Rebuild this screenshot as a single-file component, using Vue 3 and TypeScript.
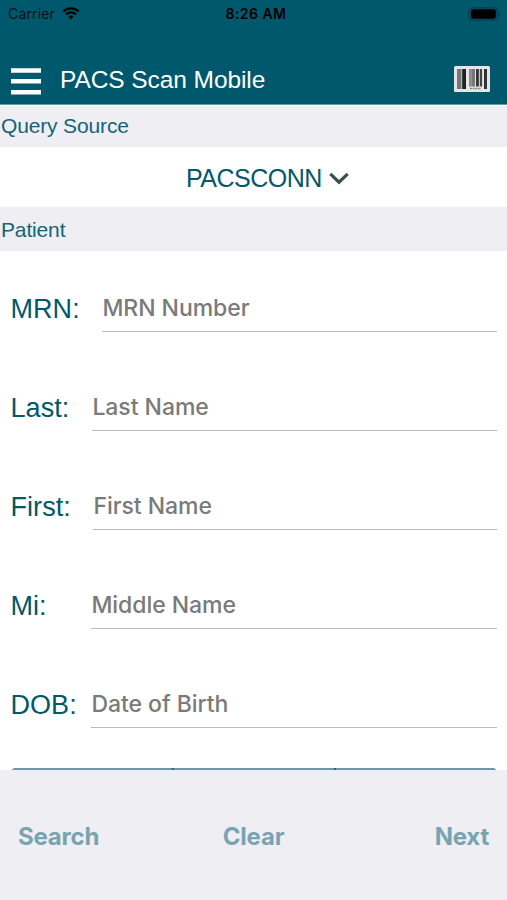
<script setup lang="ts">
import { reactive } from 'vue'

interface Field {
  key: string
  label: string
  placeholder: string
}

const fields: Field[] = [
  { key: 'mrn', label: 'MRN:', placeholder: 'MRN Number' },
  { key: 'last', label: 'Last:', placeholder: 'Last Name' },
  { key: 'first', label: 'First:', placeholder: 'First Name' },
  { key: 'mi', label: 'Mi:', placeholder: 'Middle Name' },
  { key: 'dob', label: 'DOB:', placeholder: 'Date of Birth' },
]

const values = reactive<Record<string, string>>({ mrn: '', last: '', first: '', mi: '', dob: '' })
</script>

<template>
  <div class="screen">
    <header class="top">
      <div class="status">
        <div class="carrier">
          <span>Carrier</span>
          <svg class="wifi" width="18" height="13" viewBox="0 0 18 13">
            <path d="M1.3 4.5a11 11 0 0 1 15.4 0" fill="none" stroke="#000" stroke-width="2.3" />
            <path d="M4 7.5a7.1 7.1 0 0 1 10 0" fill="none" stroke="#000" stroke-width="2.2" />
            <path d="M6.4 9.7a3.7 3.7 0 0 1 5.2 0L9 12.3z" fill="#000" />
          </svg>
        </div>
        <span class="time">8:26 AM</span>
        <svg class="battery" width="33" height="14" viewBox="0 0 33 14">
          <rect x=".8" y=".8" width="28.5" height="12.4" rx="3.5" fill="none" stroke="#003f4e" stroke-width="1.2" />
          <rect x="2.8" y="2.3" width="25" height="9.4" rx="2" fill="#000" />
          <path d="M30.7 5v4c1.6-.7 1.6-3.3 0-4z" fill="#003f4e" />
        </svg>
      </div>
      <div class="nav">
        <svg class="menu" width="30" height="27" viewBox="0 0 30 27">
          <path d="M0 2.5h30M0 13.3h30M0 24.2h30" stroke="#fff" stroke-width="4.4" />
        </svg>
        <h1 class="title">PACS Scan Mobile</h1>
        <svg class="barcode" width="36" height="26" viewBox="0 0 36 26">
          <rect width="36" height="26" rx="1.5" fill="#e4e6e7" />
          <rect x="3" y="3" width="4.5" height="20" fill="#777" />
          <rect x="8.2" y="3" width="3.8" height="20" fill="#222" />
          <rect x="15" y="3" width="2.8" height="17.5" fill="#888" />
          <rect x="17.8" y="3" width="3.2" height="17.5" fill="#777" />
          <rect x="22" y="3" width="2.8" height="17.5" fill="#333" />
          <rect x="25.8" y="3" width="2.3" height="17.5" fill="#444" />
          <rect x="30" y="3" width="3" height="20" fill="#333" />
          <path d="M16 22.6h11" stroke="#888" stroke-width="1.5" stroke-dasharray="2 .6" />
        </svg>
      </div>
    </header>

    <h2 class="section first">Query Source</h2>
    <div class="source">
      <span class="source-name">PACSCONN</span>
      <svg class="chevron" width="20" height="13" viewBox="0 0 20 13">
        <path d="M1.3 1.8 10 10.2l8.7-8.4" fill="none" stroke="#36504f" stroke-width="3.2" />
      </svg>
    </div>
    <h2 class="section">Patient</h2>

    <main class="form">
      <label v-for="f in fields" :key="f.key" class="row" :class="f.key">
        <span class="label">{{ f.label }}</span>
        <input v-model="values[f.key]" class="input" type="text" :placeholder="f.placeholder" />
      </label>
      <div class="segments">
        <span class="segment"></span>
        <span class="segment"></span>
        <span class="segment"></span>
      </div>
    </main>

    <footer class="actions">
      <button class="action search">Search</button>
      <button class="action clear">Clear</button>
      <button class="action next">Next</button>
    </footer>
  </div>
</template>

<style>
body {
  margin: 0;
  background: #fff;
}
</style>

<style scoped>
.screen {
  display: flex;
  flex-direction: column;
  width: 507px;
  height: 900px;
  overflow: hidden;
  background: #fff;
  color: #00586d;
  font-family: "Liberation Sans", sans-serif;
}
.top {
  height: 104px;
  flex: none;
  background: #00586d;
  border-bottom: 1px solid #609aa8;
}
.status {
  display: grid;
  grid-template-columns: 1fr auto 1fr;
  align-items: center;
  height: 27px;
  padding: 0 6px 0 8px;
  color: #001217;
  font-family: Inter, sans-serif;
  font-size: 14px;
}
.carrier {
  display: flex;
  align-items: center;
  gap: 7px;
  letter-spacing: .15px;
}
.time {
  color: #000;
  font-weight: 600;
  letter-spacing: .45px;
  padding-left: 3px;
}
.battery {
  justify-self: end;
}
.nav {
  display: flex;
  align-items: center;
  box-sizing: border-box;
  height: 77px;
  padding: 27px 17px 0 11px;
}
.menu {
  margin-top: 4px;
}
.title {
  flex: 1;
  margin: 2px 0 0 19px;
  color: #fff;
  font-size: 24.5px;
  font-weight: 400;
  letter-spacing: -.08px;
  line-height: 30px;
}
.section {
  flex: none;
  box-sizing: border-box;
  height: 44px;
  margin: 0;
  padding-left: 1px;
  background: #efeef3;
  color: #14647a;
  font-size: 21px;
  font-weight: 400;
  letter-spacing: -.15px;
  line-height: 45px;
}
.section.first {
  height: 42px;
  border-top: 1px solid #fff;
  line-height: 40px;
}
.source {
  display: flex;
  flex: none;
  align-items: center;
  gap: 7px;
  height: 60px;
  padding: 1px 0 0 186px;
  box-sizing: border-box;
  font-size: 25px;
}
.source-name {
  letter-spacing: -.5px;
  line-height: 30px;
}
.chevron {
  margin-top: 1px;
}
.form {
  flex: 1;
  min-height: 0;
  overflow: hidden;
  padding: 0 10px 0 9px;
}
.row {
  display: flex;
  align-items: flex-end;
  height: 98.9px;
}
.row.mrn {
  height: 81px;
}
.label {
  flex: none;
  box-sizing: border-box;
  width: 82px;
  padding-left: 1.5px;
  font-size: 27px;
  letter-spacing: .05px;
  line-height: 32px;
  margin-bottom: 7px;
}
.mrn .label { width: 93px; }
.last .label { width: 83px; }
.first .label { width: 84px; }
.input {
  flex: 1;
  min-width: 0;
  height: 48px;
  box-sizing: border-box;
  margin: 0;
  padding: 2px 0 0 .4px;
  border: 0;
  border-bottom: 1.5px solid #bcbcbc;
  background: transparent;
  outline: none;
  color: #333;
  font-family: Inter, sans-serif;
  font-size: 23px;
  font-weight: 500;
  letter-spacing: -.05px;
}
.mrn .input {
  padding-top: 0;
}
.input::placeholder {
  color: #7a7a7a;
  opacity: 1;
}
.segments {
  display: flex;
  gap: 2px;
  height: 60px;
  margin: 40px 0 0 2px;
  border-radius: 5px;
  overflow: hidden;
  background: #2b6878;
}
.segment {
  flex: 1;
  border-top: 2px solid #6a9aa8;
  background: #fff;
}
.segment:first-child {
  border-left: 2px solid #6a9aa8;
  border-top-left-radius: 5px;
}
.segment:last-child {
  border-right: 2px solid #6a9aa8;
  border-top-right-radius: 5px;
}
.actions {
  display: grid;
  flex: none;
  grid-template-columns: 1fr auto 1fr;
  height: 130px;
  padding: 0 18px;
  box-sizing: border-box;
  background: #efeef3;
}
.action {
  height: 133px;
  padding: 0;
  border: 0;
  background: none;
  color: #78a4b2;
  font-family: Inter, sans-serif;
  font-size: 24px;
  font-weight: 700;
  letter-spacing: -.2px;
}
.search { justify-self: start; }
.next { justify-self: end; }
</style>
